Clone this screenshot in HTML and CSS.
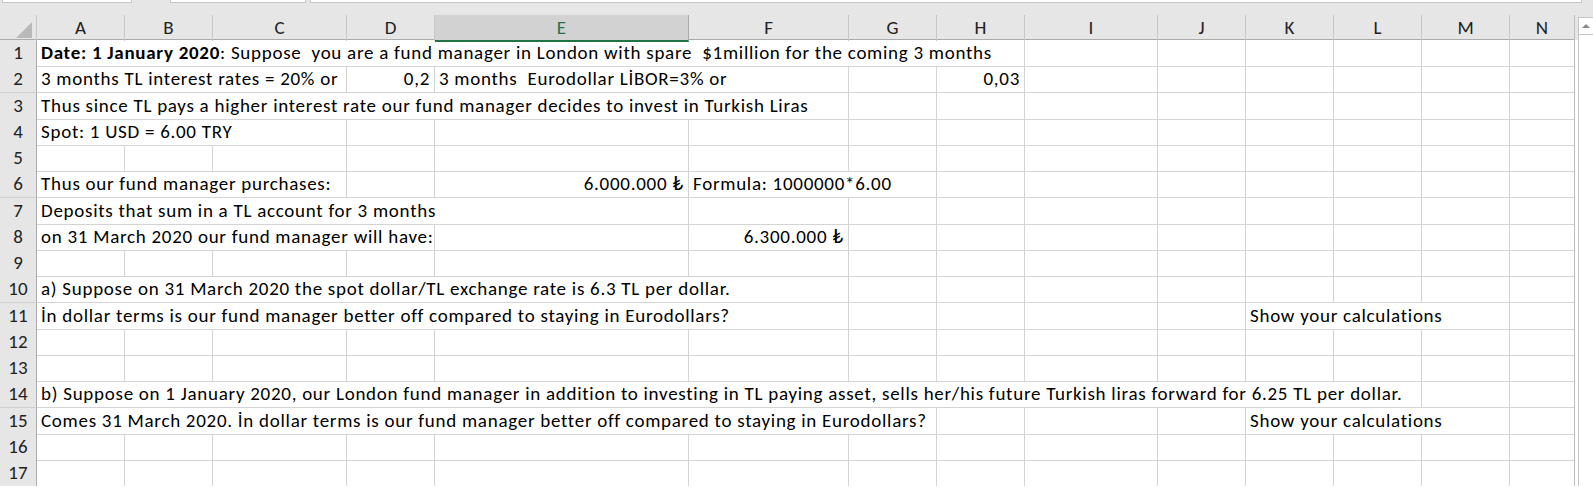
FILE: index.html
```html
<!DOCTYPE html>
<html>
<head>
    <meta charset="utf-8">
    <link rel="stylesheet" href="styles.css">
</head>
<body>
    <div class="topbar">
        <div class="box name-box"></div>
        <div class="box fx-box"></div>
        <div class="box formula-box"></div>
    </div>
    <div class="main">
        <div class="sheet">
            <div class="row head">
                <div class="corner"><span class="tri"></span></div>
                <div class="ch">A</div><div class="ch">B</div><div class="ch">C</div><div class="ch">D</div>
                <div class="ch active">E</div><div class="ch">F</div><div class="ch">G</div><div class="ch">H</div>
                <div class="ch">I</div><div class="ch">J</div><div class="ch">K</div><div class="ch">L</div>
                <div class="ch">M</div><div class="ch">N</div>
            </div>
            <div class="row">
                <div class="rh">1</div>
                <div class="c s8"><b>Date: 1 January 2020</b>: Suppose  you are a fund manager in London with spare  $1million for the coming 3 months</div>
                <div class="c"></div><div class="c"></div><div class="c"></div><div class="c"></div><div class="c"></div><div class="c"></div>
            </div>
            <div class="row">
                <div class="rh">2</div>
                <div class="c s3">3 months TL interest rates = 20% or</div>
                <div class="c r">0,2</div>
                <div class="c s2">3 months  Eurodollar LİBOR=3% or</div>
                <div class="c"></div>
                <div class="c r">0,03</div>
                <div class="c"></div><div class="c"></div><div class="c"></div><div class="c"></div><div class="c"></div><div class="c"></div>
            </div>
            <div class="row">
                <div class="rh">3</div>
                <div class="c s6">Thus since TL pays a higher interest rate our fund manager decides to invest in Turkish Liras</div>
                <div class="c"></div><div class="c"></div><div class="c"></div><div class="c"></div><div class="c"></div><div class="c"></div><div class="c"></div><div class="c"></div>
            </div>
            <div class="row">
                <div class="rh">4</div>
                <div class="c s3">Spot: 1 USD = 6.00 TRY</div>
                <div class="c"></div><div class="c"></div><div class="c"></div><div class="c"></div><div class="c"></div><div class="c"></div>
                <div class="c"></div><div class="c"></div><div class="c"></div><div class="c"></div><div class="c"></div>
            </div>
            <div class="row">
                <div class="rh">5</div>
                <div class="c"></div><div class="c"></div><div class="c"></div><div class="c"></div><div class="c"></div><div class="c"></div><div class="c"></div>
                <div class="c"></div><div class="c"></div><div class="c"></div><div class="c"></div><div class="c"></div><div class="c"></div><div class="c"></div>
            </div>
            <div class="row">
                <div class="rh">6</div>
                <div class="c s3">Thus our fund manager purchases:</div>
                <div class="c"></div>
                <div class="c r">6.000.000 ₺</div>
                <div class="c s2">Formula: 1000000*6.00</div>
                <div class="c"></div><div class="c"></div><div class="c"></div><div class="c"></div><div class="c"></div><div class="c"></div><div class="c"></div>
            </div>
            <div class="row">
                <div class="rh">7</div>
                <div class="c s5">Deposits that sum in a TL account for 3 months</div>
                <div class="c"></div><div class="c"></div><div class="c"></div><div class="c"></div><div class="c"></div><div class="c"></div><div class="c"></div><div class="c"></div><div class="c"></div>
            </div>
            <div class="row">
                <div class="rh">8</div>
                <div class="c s4">on 31 March 2020 our fund manager will have:</div>
                <div class="c"></div>
                <div class="c r">6.300.000 ₺</div>
                <div class="c"></div><div class="c"></div><div class="c"></div><div class="c"></div><div class="c"></div><div class="c"></div><div class="c"></div><div class="c"></div>
            </div>
            <div class="row">
                <div class="rh">9</div>
                <div class="c"></div><div class="c"></div><div class="c"></div><div class="c"></div><div class="c"></div><div class="c"></div><div class="c"></div>
                <div class="c"></div><div class="c"></div><div class="c"></div><div class="c"></div><div class="c"></div><div class="c"></div><div class="c"></div>
            </div>
            <div class="row">
                <div class="rh">10</div>
                <div class="c s6">a) Suppose on 31 March 2020 the spot dollar/TL exchange rate is 6.3 TL per dollar.</div>
                <div class="c"></div><div class="c"></div><div class="c"></div><div class="c"></div><div class="c"></div><div class="c"></div><div class="c"></div><div class="c"></div>
            </div>
            <div class="row">
                <div class="rh">11</div>
                <div class="c s6">İn dollar terms is our fund manager better off compared to staying in Eurodollars?</div>
                <div class="c"></div><div class="c"></div><div class="c"></div><div class="c"></div>
                <div class="c s3">Show your calculations</div>
                <div class="c"></div>
            </div>
            <div class="row">
                <div class="rh">12</div>
                <div class="c"></div><div class="c"></div><div class="c"></div><div class="c"></div><div class="c"></div><div class="c"></div><div class="c"></div>
                <div class="c"></div><div class="c"></div><div class="c"></div><div class="c"></div><div class="c"></div><div class="c"></div><div class="c"></div>
            </div>
            <div class="row">
                <div class="rh">13</div>
                <div class="c"></div><div class="c"></div><div class="c"></div><div class="c"></div><div class="c"></div><div class="c"></div><div class="c"></div>
                <div class="c"></div><div class="c"></div><div class="c"></div><div class="c"></div><div class="c"></div><div class="c"></div><div class="c"></div>
            </div>
            <div class="row">
                <div class="rh">14</div>
                <div class="c s12">b) Suppose on 1 January 2020, our London fund manager in addition to investing in TL paying asset, sells her/his future Turkish liras forward for 6.25 TL per dollar.</div>
                <div class="c"></div><div class="c"></div>
            </div>
            <div class="row">
                <div class="rh">15</div>
                <div class="c s7">Comes 31 March 2020. İn dollar terms is our fund manager better off compared to staying in Eurodollars?</div>
                <div class="c"></div><div class="c"></div><div class="c"></div>
                <div class="c s3">Show your calculations</div>
                <div class="c"></div>
            </div>
            <div class="row">
                <div class="rh">16</div>
                <div class="c"></div><div class="c"></div><div class="c"></div><div class="c"></div><div class="c"></div><div class="c"></div><div class="c"></div>
                <div class="c"></div><div class="c"></div><div class="c"></div><div class="c"></div><div class="c"></div><div class="c"></div><div class="c"></div>
            </div>
            <div class="row">
                <div class="rh">17</div>
                <div class="c"></div><div class="c"></div><div class="c"></div><div class="c"></div><div class="c"></div><div class="c"></div><div class="c"></div>
                <div class="c"></div><div class="c"></div><div class="c"></div><div class="c"></div><div class="c"></div><div class="c"></div><div class="c"></div>
            </div>
        </div>
        <div class="vscroll">
            <div class="up"><span class="arrow"></span></div>
            <div class="track"></div>
        </div>
    </div>
</body>
</html>
```
FILE: styles.css
```css
* {
    box-sizing: border-box;
}
body {
    margin: 0;
    background-color: #fff;
    font-family: Calibri, Carlito, Lato, "DejaVu Sans", sans-serif;
    color: #000;
    overflow: hidden;
}
.topbar {
    height: 15px;
    background-color: #e6e6e6;
    display: flex;
    align-items: flex-start;
    padding-left: 2px;
}
.box {
    height: 3px;
    background-color: #fff;
    border: 1px solid #c6c6c6;
    border-top: 0;
}
.name-box {
    width: 130px;
}
.fx-box {
    width: 136px;
    margin-left: 38px;
}
.formula-box {
    flex: 1;
    margin-left: 4px;
    margin-right: 11px;
}
.main {
    display: flex;
}
.sheet {
    width: 1575px;
    border-right: 1px solid #bdbdbd;
}
.row {
    display: grid;
    grid-template-columns: 37px 88px 88px 134px 88px 254px 160px 88px 88px 133px 88px 88px 88px 88px 64px;
    height: 26.25px;
}
.row.head {
    height: 25px;
    background-color: #e6e6e6;
    border-bottom: 1px solid #ababab;
}
.corner {
    position: relative;
    border-right: 1px solid #c6c6c6;
}
.tri {
    position: absolute;
    right: 4px;
    bottom: 3px;
    width: 0;
    height: 0;
    border-left: 16px solid transparent;
    border-bottom: 16px solid #b9b9b9;
}
.ch {
    border-right: 1px solid #c6c6c6;
    text-align: center;
    font-size: 19px;
    line-height: 25px;
    color: #222;
}
.ch:last-child {
    border-right: 0;
}
.ch.active {
    background-color: #d2d2d2;
    color: #217346;
    border-bottom: 2px solid #217346;
    margin-bottom: -1px;
    border-right-color: #ababab;
}
.rh {
    background-color: #e6e6e6;
    border-right: 1px solid #ababab;
    border-bottom: 1px solid #d0d0d0;
    text-align: center;
    font-size: 19px;
    line-height: 26px;
    color: #222;
}
.c {
    border-right: 1px solid #d4d4d4;
    border-bottom: 1px solid #d4d4d4;
    padding: 0 4px;
    font-size: 19px;
    letter-spacing: 0.72px;
    line-height: 26px;
    white-space: pre;
    overflow: visible;
}
.c:last-child {
    border-right: 0;
}
.r {
    text-align: right;
}
.s2 { grid-column: span 2; }
.s3 { grid-column: span 3; }
.s4 { grid-column: span 4; }
.s5 { grid-column: span 5; }
.s6 { grid-column: span 6; }
.s7 { grid-column: span 7; }
.s8 { grid-column: span 8; }
.s12 { grid-column: span 12; }
.vscroll {
    flex: 1;
    display: flex;
    flex-direction: column;
    padding: 2px 0 0 3px;
    background: linear-gradient(#e6e6e6 0 25px, #fff 25px);
}
.up {
    height: 18px;
    background-color: #fff;
    border: 1px solid #c6c6c6;
    border-right: 0;
    display: flex;
    justify-content: center;
    align-items: center;
}
.arrow {
    width: 0;
    height: 0;
    border-left: 4px solid transparent;
    border-right: 4px solid transparent;
    border-bottom: 4px solid #8a8a8a;
}
.track {
    flex: 1;
    background-color: #fff;
    border-left: 1px solid #c6c6c6;
}
```
